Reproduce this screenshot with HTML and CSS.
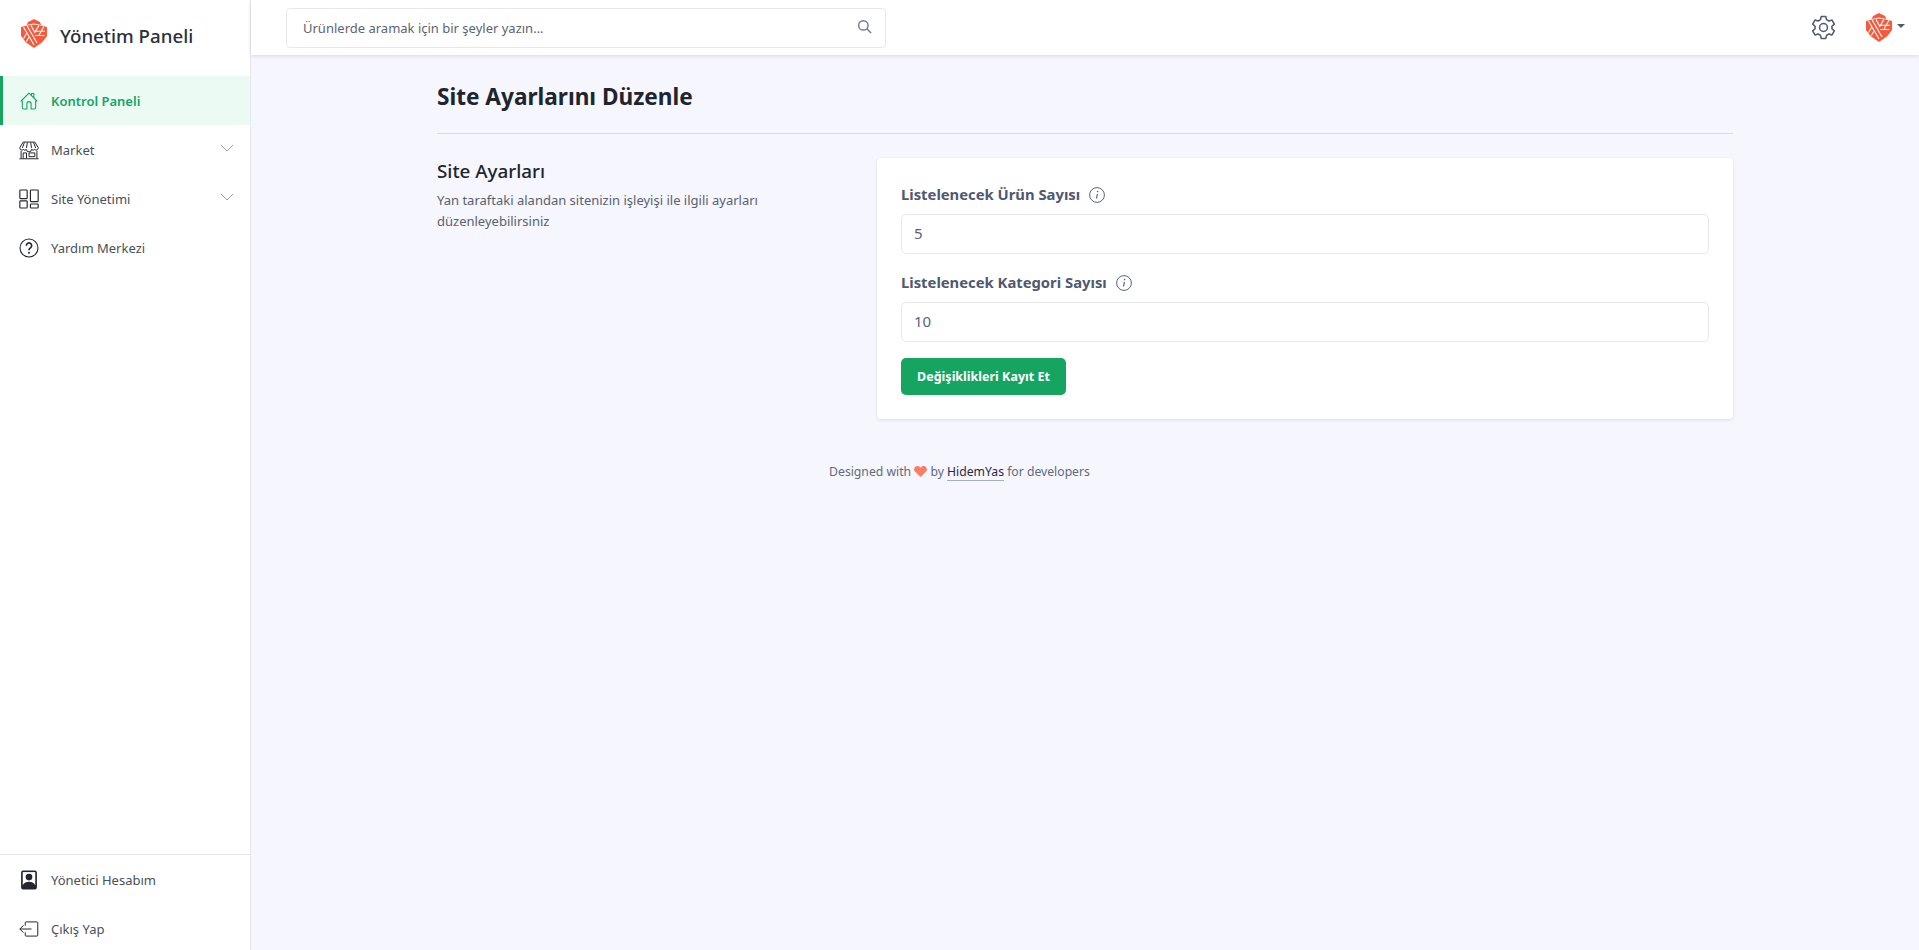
FILE: index.html
```html
<!DOCTYPE html>
<html lang="tr">
<head>
<meta charset="utf-8">
<title>Yönetim Paneli</title>
<link rel="stylesheet" href="styles.css">
</head>
<body>
<svg class="defs" width="0" height="0" aria-hidden="true">
  <symbol id="logo" viewBox="0 0 26 29">
    <path fill="#f8593b" d="M13 0l6 3 1.200 3L13 4.500 5.800 6 7 3zM0 8l5-1.200L13 5.400l8 1.400L26 8v9l-4.800 6.200L13 29l-8.200-5.800L0 17z"/>
    <path fill="none" stroke="#fff" stroke-width="1.100" d="M2.500 8l10.500 18M6.200 7l9.800 17M10 6.500l3.800 6.800L17.800 6.600M22.800 7.500L17.500 17M5.500 14.500L2.600 19.500M7.800 18.500l-2.500 4M15.200 12.200h8.800M14 16.500h9.500"/>
  </symbol>
</svg>
<div class="app">
  <aside class="sidebar">
    <div class="brand">
      <svg class="brand-logo"><use href="#logo"/></svg>
      <span class="brand-name">Yönetim Paneli</span>
    </div>
    <nav class="nav">
      <a class="nav-item active">
        <svg class="nav-icon" viewBox="0 0 24 24" fill="none" stroke="currentColor" stroke-width="1.300" stroke-linejoin="round"><path d="M5.500 21.500h4v-6.300a2.500 2.500 0 0 1 5 0v6.300h4a1.500 1.500 0 0 0 1.500-1.500v-8h1.500L12 2.500 2.500 12H4v8a1.500 1.500 0 0 0 1.500 1.500zM15 5.500V3h2.800v5"/></svg>
        <span>Kontrol Paneli</span>
      </a>
      <a class="nav-item">
        <svg class="nav-icon" viewBox="0 0 24 24" fill="none" stroke="currentColor" stroke-width="1.200"><path d="M5 2.500h14l4 6.500v1a2.300 2.300 0 0 1-4 1.300 2.800 2.800 0 0 1-4 0 2.800 2.800 0 0 1-6 0 2.800 2.800 0 0 1-4 0 2.300 2.300 0 0 1-4-1.300V9zM2.500 13v9M21.500 13v9M.5 22.500h23M5 22v-6.500h4V22M12 15.500h7V20h-7z"/><path d="M6.500 3L4 9.500M10 3L9 9.500M14 3l1 6.500M17.500 3L20 9.500"/></svg>
        <span>Market</span>
        <svg class="chev" viewBox="0 0 14 8" fill="none" stroke="currentColor"><path d="M1 1l6 6 6-6"/></svg>
      </a>
      <a class="nav-item">
        <svg class="nav-icon" viewBox="0 0 24 24" fill="none" stroke="currentColor" stroke-width="1.400"><rect x="1" y="1.200" width="8.800" height="10.300" rx="1"/><rect x="13.700" y="1.200" width="9.300" height="14" rx="1"/><rect x="1" y="14.300" width="8.800" height="8.500" rx="1"/><rect x="13.700" y="18" width="9.300" height="4.800" rx="1"/></svg>
        <span>Site Yönetimi</span>
        <svg class="chev" viewBox="0 0 14 8" fill="none" stroke="currentColor"><path d="M1 1l6 6 6-6"/></svg>
      </a>
      <a class="nav-item">
        <svg class="nav-icon" viewBox="0 0 24 24" fill="none" stroke="currentColor" stroke-width="1.300"><circle cx="12" cy="12" r="10.800"/><path stroke-width="2" d="M8.800 9.200a3.200 3.200 0 1 1 4.900 2.700c-1.200.8-1.700 1.400-1.700 2.800"/><circle cx="12" cy="17.600" r="1.200" fill="currentColor" stroke="none"/></svg>
        <span>Yardım Merkezi</span>
      </a>
    </nav>
    <div class="nav-bottom">
      <a class="nav-item">
        <svg class="nav-icon" viewBox="0 0 24 24"><path fill="#23272e" d="M5 .5h14A2.500 2.500 0 0 1 21.500 3v18a2.500 2.500 0 0 1-2.500 2.500H5A2.500 2.500 0 0 1 2.500 21V3A2.500 2.500 0 0 1 5 .5z"/><path fill="#fff" d="M4.500 2.500h15V18h-15z"/><circle cx="12" cy="8.500" r="4" fill="#23272e"/><path fill="#23272e" d="M4.500 18.500c1-3 3.800-4.500 7.500-4.500s6.500 1.500 7.500 4.500V21h-15z"/></svg>
        <span>Yönetici Hesabım</span>
      </a>
      <a class="nav-item">
        <svg class="nav-icon" viewBox="0 0 24 24" fill="none" stroke="currentColor" stroke-width="1.200"><path d="M7.500 8V4.500a1 1 0 0 1 1-1h13a1 1 0 0 1 1 1v15a1 1 0 0 1-1 1h-13a1 1 0 0 1-1-1V16M1 12h14M5.500 7.500L1 12l4.500 4.500"/></svg>
        <span>Çıkış Yap</span>
      </a>
    </div>
  </aside>
  <div class="main">
    <header class="topbar">
      <div class="search">
        <span class="search-text">Ürünlerde aramak için bir şeyler yazın...</span>
        <svg class="search-icon" viewBox="0 0 16 16" fill="none" stroke="currentColor" stroke-width="1.500"><circle cx="6.800" cy="6.800" r="5"/><path d="M10.500 10.500l4.500 4.500"/></svg>
      </div>
      <div class="top-actions">
        <svg class="gear" viewBox="0 0 24 24" fill="none" stroke="currentColor" stroke-width="1.500" stroke-linejoin="round"><circle cx="12" cy="12" r="3.800"/><path d="M9.800 1.500h4.400l.7 3 2.300 1.300 3-.9 2.200 3.800-2.300 2.100v2.400l2.300 2.100-2.200 3.800-3-.9-2.300 1.300-.7 3H9.800l-.7-3-2.300-1.300-3 .9-2.200-3.800 2.300-2.100v-2.400L1.600 8.700l2.200-3.800 3 .9 2.300-1.300z"/></svg>
        <div class="account">
          <svg class="account-logo"><use href="#logo"/></svg>
          <span class="caret"></span>
        </div>
      </div>
    </header>
    <main class="content">
      <h1 class="page-title">Site Ayarlarını Düzenle</h1>
      <div class="layout">
        <section class="intro">
          <h2>Site Ayarları</h2>
          <p>Yan taraftaki alandan sitenizin işleyişi ile ilgili ayarları düzenleyebilirsiniz</p>
        </section>
        <form class="card">
          <div class="label"><span>Listelenecek Ürün Sayısı</span>
            <svg class="info" viewBox="0 0 16 16" fill="none" stroke="currentColor"><circle cx="8" cy="8" r="7.400"/><path stroke-width="1.200" d="M8.400 7l-.9 4.500"/><circle cx="8.600" cy="4.600" r=".8" fill="currentColor" stroke="none"/></svg>
          </div>
          <div class="field">5</div>
          <div class="label"><span>Listelenecek Kategori Sayısı</span>
            <svg class="info" viewBox="0 0 16 16" fill="none" stroke="currentColor"><circle cx="8" cy="8" r="7.400"/><path stroke-width="1.200" d="M8.400 7l-.9 4.500"/><circle cx="8.600" cy="4.600" r=".8" fill="currentColor" stroke="none"/></svg>
          </div>
          <div class="field">10</div>
          <div class="btn">Değişiklikleri Kayıt Et</div>
        </form>
      </div>
      <footer class="footer">Designed with <svg class="heart" viewBox="0 0 14 12"><path fill="#f87e64" d="M7 12L1.200 6.200A3.500 3.500 0 0 1 6.200 1.200L7 2l.8-.8a3.500 3.500 0 0 1 5 5z"/></svg> by <a class="footer-link">HidemYas</a> for developers</footer>
    </main>
  </div>
</div>
</body>
</html>
```
FILE: styles.css
```css
* { box-sizing: border-box; }
html, body { margin: 0; height: 100%; }
body {
  font-family: "Noto Sans", "Open Sans", sans-serif;
  color: #252a34;
  background: #f5f6fe;
  overflow: hidden;
}
.defs { position: absolute; }
.app { display: flex; height: 953px; }
.sidebar {
  width: 251px;
  flex: none;
  background: #fff;
  border-right: 1px solid #e6e8ee;
  display: flex;
  flex-direction: column;
}
.brand {
  height: 76px;
  padding: 19px 0 0 21px;
  display: flex;
  align-items: flex-start;
  gap: 13px;
}
.brand-logo { width: 26px; height: 29px; flex: none; }
.brand-name { font-size: 18.7px; font-weight: 500; line-height: 34px; color: #2a2f3a; }
.nav { flex: 1; }
.nav-item {
  height: 49px;
  display: flex;
  align-items: center;
  padding-left: 19px;
  gap: 12px;
  font-size: 13px;
  color: #4a4f5a;
}
.nav-icon { width: 20px; height: 20px; flex: none; color: #23272e; }
.nav-item.active {
  background: #ebfbf4;
  color: #16a461;
  font-weight: 600;
  border-left: 3px solid #16a461;
  padding-left: 16px;
}
.nav-item.active .nav-icon { color: #16a461; }
.chev { width: 14px; height: 8px; margin-left: auto; margin-right: 16px; color: #9aa1ad; margin-top: -3px; }
.nav-bottom { border-top: 1px solid #e6e8ee; }
.main { flex: 1; display: flex; flex-direction: column; min-width: 0; }
.topbar {
  height: 55px;
  flex: none;
  background: #fff;
  box-shadow: 0 1px 4px rgba(40, 50, 90, .14);
  display: flex;
  align-items: center;
  justify-content: space-between;
  padding: 0 14px 0 35px;
}
.search {
  width: 600px;
  height: 40px;
  border: 1px solid #e6e8ee;
  border-radius: 4px;
  display: flex;
  align-items: center;
  justify-content: space-between;
  padding: 0 13px 0 16px;
}
.search-text { font-size: 13px; color: #5c6470; }
.search-icon { width: 15px; height: 15px; color: #6b7a90; margin-bottom: 3px; }
.top-actions { display: flex; align-items: center; gap: 30px; }
.gear { width: 25px; height: 25px; color: #4f5b70; }
.account { display: flex; align-items: center; gap: 5px; }
.account-logo { width: 26px; height: 29px; }
.caret {
  width: 0;
  height: 0;
  border-left: 4px solid transparent;
  border-right: 4px solid transparent;
  border-top: 4px solid #4f5b70;
  margin-bottom: 4px;
}
.content { flex: 1; padding: 0 186px 0 186px; }
.page-title {
  margin: 0;
  height: 79px;
  padding-top: 30px;
  font-size: 22.6px;
  line-height: 24px;
  font-weight: 700;
  color: #20242c;
  border-bottom: 1px solid #d8dae6;
}
.layout { display: flex; margin-top: 24px; }
.intro { width: 440px; flex: none; padding-right: 90px; }
.intro h2 { margin: 1px 0 0; font-size: 18.8px; line-height: 24px; font-weight: 500; color: #20242c; }
.intro p { margin: 7px 0 0; font-size: 13px; line-height: 21px; color: #5a616e; }
.card {
  flex: 1;
  height: 261px;
  background: #fff;
  border-radius: 4px;
  box-shadow: 0 1px 3px rgba(40, 50, 90, .12);
  padding: 24px;
}
.label {
  height: 32px;
  display: flex;
  align-items: flex-start;
  gap: 9px;
  font-size: 14.8px;
  line-height: 24px;
  font-weight: 700;
  color: #4f5870;
}
.info { width: 16px; height: 16px; margin-top: 5px; color: #5a6478; }
.field {
  height: 40px;
  border: 1px solid #e6e8ee;
  border-radius: 5px;
  background: #fff;
  padding: 0 12px;
  font-size: 15px;
  line-height: 36px;
  color: #5a6378;
  margin-bottom: 16px;
}
.btn {
  width: 165px;
  height: 37px;
  background: #16a461;
  border-radius: 5px;
  color: #fff;
  font-size: 12.5px;
  font-weight: 700;
  display: flex;
  align-items: center;
  justify-content: center;
}
.footer {
  margin-top: 43px;
  padding-right: 251px;
  text-align: center;
  font-size: 12.2px;
  line-height: 20px;
  color: #5f6a7e;
}
.heart { width: 13px; height: 11px; vertical-align: -1px; }
.footer-link { color: #252a44; border-bottom: 1px solid #a8aec0; }
```
